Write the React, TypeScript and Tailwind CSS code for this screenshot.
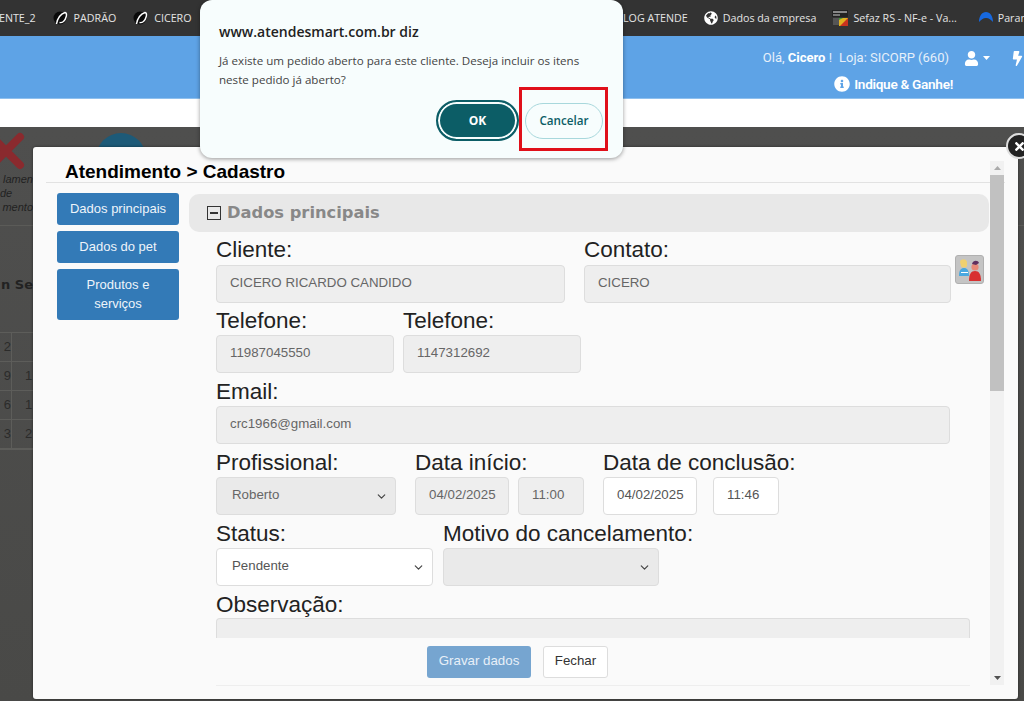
import { ChevronDown } from "lucide-react";
import { FaUser, FaBolt, FaInfoCircle, FaGlobeAmericas, FaTimes } from "react-icons/fa";

const Leaf = () => (
  <svg width="16" height="16" viewBox="0 0 16 16" className="shrink-0">
    <circle cx="7" cy="8" r="6.5" fill="#0a0a0a" />
    <path d="M3.5 14C4 11 5 5 12 2.5C15 3 13 9 10.5 11.5C8.5 13 6.5 12.5 6.5 12.5" fill="none" stroke="#fff" strokeWidth="1.4" />
  </svg>
);

const Bookmark = ({ children, icon }: { children: string; icon?: React.ReactNode }) => (
  <div className="flex items-center gap-[5px] text-[10.7px] text-[#e4e4e4] whitespace-nowrap">
    {icon}
    <span>{children}</span>
  </div>
);

const Label = ({ children }: { children: string }) => (
  <div className="text-[22.5px] leading-[22px] text-[#222] font-['Liberation_Sans',sans-serif]">{children}</div>
);

const Field = ({ value, w, white }: { value: string; w: string; white?: boolean }) => (
  <div className={`${w} h-[38px] flex items-center rounded-[4px] border border-[#ddd] px-[13px] pb-[2px] text-[13.3px] ${white ? "bg-white text-[#555]" : "bg-[#eeeeee] text-[#666]"}`}>
    {value}
  </div>
);

const Select = ({ value, w, white }: { value: string; w: string; white?: boolean }) => (
  <div className={`${w} h-[38px] flex items-center justify-between rounded-[4px] border border-[#ddd] pl-[15px] pr-[7px] text-[13.3px] ${white ? "bg-white text-[#555]" : "bg-[#eaeaea] text-[#666]"}`}>
    <span className="pb-[2px]">{value}</span>
    <ChevronDown size={13} strokeWidth={2.2} className="text-[#444]" />
  </div>
);

const SideBtn = ({ children, h }: { children: React.ReactNode; h: string }) => (
  <div className={`w-[122px] ${h} flex items-center justify-center text-center rounded-[3px] pb-[2px] bg-[#337ab7] text-[#eef4fa] text-[13px] leading-[19px]`}>
    {children}
  </div>
);

export default function App() {
  return (
    <div className="relative w-[1024px] h-[701px] overflow-hidden bg-[#4a4a48] font-['Liberation_Sans',sans-serif]">
      {/* bookmarks bar */}
      <div className="h-[36px] bg-[#333333] flex items-center font-['Open_Sans',sans-serif] overflow-hidden">
        <div className="w-[623px] shrink-0 flex items-center gap-[17px] -ml-[1px]">
          <Bookmark>ENTE_2</Bookmark>
          <Bookmark icon={<Leaf />}>PADRÃO</Bookmark>
          <Bookmark icon={<Leaf />}>CICERO</Bookmark>
        </div>
        <div className="flex items-center gap-[16px] ml-[1px]">
          <Bookmark>LOG ATENDE</Bookmark>
          <Bookmark icon={<FaGlobeAmericas size={14} className="text-white" />}>Dados da empresa</Bookmark>
          <Bookmark
            icon={
              <svg width="16" height="16" viewBox="0 0 16 16" className="shrink-0">
                <rect width="16" height="7" fill="#222" />
                <rect x="1" y="1" width="14" height="2" fill="#888" />
                <rect x="1" y="4" width="7" height="2" fill="#777" />
                <rect x="1" y="8" width="6" height="7" fill="#555" />
                <rect x="7" y="8" width="9" height="8" fill="#e0b020" />
                <path d="M8 16L16 8V16Z" fill="#c8321e" />
                <path d="M7 16V10L11 8H7Z" fill="#3a9a3a" />
              </svg>
            }
          >
            Sefaz RS - NF-e - Va...
          </Bookmark>
          <div className="ml-[6px]">
            <Bookmark
              icon={
                <svg width="14" height="14" viewBox="0 0 14 14" className="shrink-0">
                  <path d="M0 11C0 5 3 1 7 1C11 1 14 5 14 11C12 9 10 7 7 7C4 7 2 9 0 11Z" fill="#1769e0" />
                </svg>
              }
            >
              Parametros
            </Bookmark>
          </div>
        </div>
      </div>

      {/* blue header */}
      <div className="h-[63px] bg-[#5ea3e6] flex flex-col items-end pt-[12px] text-white border-b border-[#8fc0ee]">
        <div className="flex items-center h-[20px] text-[13px] text-[#e6f0fa] whitespace-nowrap -mr-[6px] font-['Roboto',sans-serif]">
          <span>
            Olá, <b className="text-white">Cicero</b> !
          </span>
          <span className="ml-[7px]">Loja: SICORP (660)</span>
          <FaUser size={15} className="ml-[15px] text-white" />
          <svg width="7" height="4" viewBox="0 0 7 4" className="ml-[4px]">
            <path d="M0 0H7L3.5 4Z" fill="#fff" />
          </svg>
          <FaBolt size={15} className="ml-[20px] text-white" />
          <span className="w-[5px]" />
        </div>
        <div className="flex items-center mt-[6px] mr-[71px] text-[13.6px] font-semibold tracking-[-0.3px] whitespace-nowrap font-['Roboto',sans-serif]">
          <FaInfoCircle size={16} className="mr-[4px]" />
          Indique &amp; Ganhe!
        </div>
      </div>

      {/* white band */}
      <div className="h-[28px] bg-white" />

      {/* dimmed page content */}
      <div className="h-[574px] bg-gradient-to-b from-[#4f4f4e] to-[#494947] relative text-[#222]">
        <div className="flex flex-col">
          <div className="h-[99px] border-b border-[#5b5b58]" />
          <div className="h-[49px]" />
          <div className="text-[13px] font-bold font-['DejaVu_Sans',sans-serif] whitespace-nowrap w-[33px] overflow-hidden flex justify-end">
            <span>n Se</span>
          </div>
        </div>
      </div>

      {/* dimmed X and circle behind modal */}
      <div className="absolute left-0 top-[132px]">
        <svg width="26" height="38" viewBox="0 0 26 38">
          <path d="M-8 5L20 33M20 5L-8 33" stroke="#8a2a2e" strokeWidth="8" strokeLinecap="round" />
        </svg>
      </div>
      <div className="absolute left-[96px] top-[133px] w-[50px] h-[50px] rounded-full bg-[#1d5a78]" />
      <div className="absolute left-0 top-[172px] w-[33px] text-[11px] italic leading-[14px] text-[#222] text-right overflow-hidden whitespace-nowrap">
        <div>lamen</div>
        <div className="pr-[24px] text-left pl-0">de</div>
        <div>mento</div>
      </div>
      <div className="absolute left-0 top-[332px] w-[33px] grid grid-cols-[12px_21px] text-[13px] text-[#2b2b2a] border-y border-[#5d5d5a]">
        {[["2", ""], ["9", "1"], ["6", "1"], ["3", "2"]].map(([a, b]) => (
          <div key={a} className="contents">
            <div className="h-[29px] flex items-center justify-end border-r border-b border-[#5d5d5a]">{a}</div>
            <div className="h-[29px] flex items-center pl-[13px] border-b border-[#5d5d5a]">{b}</div>
          </div>
        ))}
      </div>

      {/* modal */}
      <div className="absolute left-[33px] top-[147px] w-[985px] h-[552px] bg-[#fafafa] rounded-[3px] flex flex-col shadow-[0_0_3px_rgba(0,0,0,0.5)]">
        <div className="mx-[13px] h-[36px] pl-[19px] pt-[14px] border-b border-[#e2e2e2] text-[19px] leading-[21px] font-bold text-black">
          Atendimento &gt; Cadastro
        </div>
        <div className="flex flex-1 min-h-0">
          <div className="w-[156px] shrink-0 pl-[24px] pt-[10px] flex flex-col gap-[6px]">
            <SideBtn h="h-[32px]">Dados principais</SideBtn>
            <SideBtn h="h-[32px]">Dados do pet</SideBtn>
            <SideBtn h="h-[51px]">
              <span>
                Produtos e
                <br />
                serviços
              </span>
            </SideBtn>
          </div>
          <div className="w-[800px] shrink-0 pt-[11px] flex flex-col overflow-hidden">
            <div className="h-[38px] rounded-[10px] bg-[#e8e8e8] flex items-center pl-[18px] gap-[6px]">
              <span className="w-[14px] h-[14px] border-[1.5px] border-[#333] flex items-center justify-center">
                <span className="w-[8px] h-[1.5px] bg-[#333]" />
              </span>
              <span className="text-[16.3px] font-bold text-[#888] font-['DejaVu_Sans',sans-serif] pt-[1px]">Dados principais</span>
            </div>
            <div className="pl-[27px] flex flex-col">
              <div className="flex mt-[7px]">
                <div className="w-[368px]">
                  <Label>Cliente:</Label>
                  <div className="mt-[4px]"><Field value="CICERO RICARDO CANDIDO" w="w-[349px]" /></div>
                </div>
                <div>
                  <Label>Contato:</Label>
                  <div className="mt-[4px]"><Field value="CICERO" w="w-[367px]" /></div>
                </div>
                <div className="ml-[4px] mt-[16px] w-[29px] h-[29px] rounded-[3px] bg-[#c4c4c4] border border-[#b0b0b0] flex items-center justify-center">
                  <svg width="26" height="26" viewBox="0 0 26 26">
                    <path d="M3 5C3 2 9 1 10 5L10 9C9 11 5 11 4 9Z" fill="#f0d070" />
                    <path d="M2 19C2 13 4 11 7 11C10 11 12 13 12 19Z" fill="#4aa8e0" />
                    <path d="M4 15H11V16H4Z" fill="#fff" />
                    <circle cx="18" cy="10" r="3.6" fill="#e88a78" />
                    <path d="M15 7C16 3 21 3 22 6L19 8Z" fill="#603060" />
                    <path d="M12 24C12 17 14 14 18 14C22 14 24 17 24 24Z" fill="#d83030" />
                  </svg>
                </div>
              </div>
              <div className="flex mt-[7px] gap-[9px]">
                <div>
                  <Label>Telefone:</Label>
                  <div className="mt-[3px]"><Field value="11987045550" w="w-[178px]" /></div>
                </div>
                <div>
                  <Label>Telefone:</Label>
                  <div className="mt-[3px]"><Field value="1147312692" w="w-[178px]" /></div>
                </div>
              </div>
              <div className="mt-[8px]">
                <Label>Email:</Label>
                <div className="mt-[3px]"><Field value="crc1966@gmail.com" w="w-[734px]" /></div>
              </div>
              <div className="flex mt-[8px]">
                <div className="w-[199px]">
                  <Label>Profissional:</Label>
                  <div className="mt-[3px]"><Select value="Roberto" w="w-[180px]" /></div>
                </div>
                <div className="w-[188px]">
                  <Label>Data início:</Label>
                  <div className="mt-[3px] flex gap-[9px]">
                    <Field value="04/02/2025" w="w-[94px]" />
                    <Field value="11:00" w="w-[66px]" />
                  </div>
                </div>
                <div>
                  <Label>Data de conclusão:</Label>
                  <div className="mt-[3px] flex gap-[16px]">
                    <Field value="04/02/2025" w="w-[94px]" white />
                    <Field value="11:46" w="w-[66px]" white />
                  </div>
                </div>
              </div>
              <div className="flex mt-[8px]">
                <div className="w-[227px]">
                  <Label>Status:</Label>
                  <div className="mt-[3px]"><Select value="Pendente" w="w-[217px]" white /></div>
                </div>
                <div>
                  <Label>Motivo do cancelamento:</Label>
                  <div className="mt-[3px]"><Select value="" w="w-[216px]" /></div>
                </div>
              </div>
              <div className="mt-[8px]">
                <Label>Observação:</Label>
                <div className="mt-[2px] h-[20px] w-[754px] rounded-t-[4px] border border-b-0 border-[#ddd] bg-[#eeeeee]" />
              </div>
              <div className="w-[754px] h-[48px] border-b border-[#eeeeee] flex items-center gap-[12px] pl-[211px]">
                <div className="w-[104px] h-[32px] rounded-[3px] pb-[1px] bg-[#76a5d0] text-[#e8f0f8] text-[13.3px] flex items-center justify-center">Gravar dados</div>
                <div className="w-[65px] h-[32px] rounded-[3px] pb-[1px] bg-white border border-[#ddd] text-[#333] text-[13.3px] flex items-center justify-center">Fechar</div>
              </div>
            </div>
          </div>
          <div className="w-[14px] shrink-0 ml-[1px] -mt-[22px] mb-[14px] bg-[#f1f1f1] flex flex-col items-center relative">
            <div className="h-[14px] flex items-center justify-center">
              <svg width="7" height="4" viewBox="0 0 7 4"><path d="M0 4H7L3.5 0Z" fill="#aaa" /></svg>
            </div>
            <div className="w-full h-[216px] bg-[#c1c1c1]" />
            <div className="flex-1" />
            <div className="h-[14px] flex items-center justify-center">
              <svg width="7" height="4" viewBox="0 0 7 4"><path d="M0 0H7L3.5 4Z" fill="#505050" /></svg>
            </div>
          </div>
        </div>
      </div>

      {/* modal close */}
      <div className="absolute left-[1006px] top-[133px] w-[26px] h-[26px] rounded-full bg-[#222] border-2 border-[#ddd] flex items-center justify-center">
        <FaTimes size={13} className="text-white" />
      </div>

      {/* browser confirm dialog */}
      <div className="absolute left-[200px] top-0 w-[423px] h-[158px] rounded-[12px] bg-[#f7fdfd] shadow-[0_1px_4px_rgba(0,0,0,0.4)] pl-[19px] pr-[20px] pt-[22px] flex flex-col font-['Open_Sans',sans-serif]">
        <div className="text-[14px] leading-[20px] font-semibold text-[#222]">www.atendesmart.com.br diz</div>
        <div className="mt-[9px] text-[11.6px] leading-[19px] text-[#444]">
          Já existe um pedido aberto para este cliente. Deseja incluir os itens neste pedido já aberto?
        </div>
        <div className="mt-[11px] flex justify-end items-center gap-[6px]">
          <div className="w-[83px] h-[41px] rounded-full bg-[#0c5d66] border-[2px] border-[#0c5d66] shadow-[inset_0_0_0_2px_#f7fdfd] text-white text-[12px] font-bold flex items-center justify-center">
            OK
          </div>
          <div className="w-[78px] h-[36px] rounded-full border border-[#a8d8dc] text-[#0c5d66] text-[11.7px] font-semibold flex items-center justify-center">
            Cancelar
          </div>
        </div>
      </div>

      {/* red highlight */}
      <div className="absolute left-[519px] top-[87px] w-[89px] h-[64px] border-[3px] border-[#e0101a]" />
    </div>
  );
}
